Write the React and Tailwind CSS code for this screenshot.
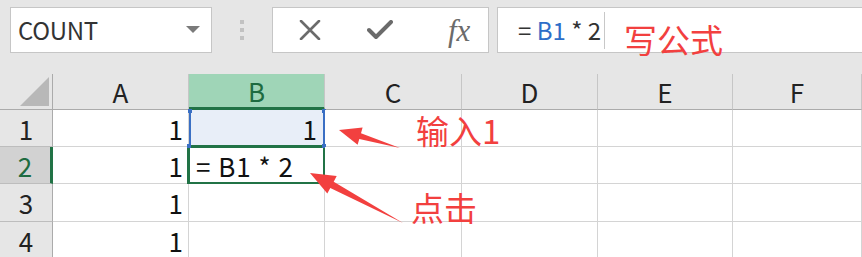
import React from 'react';

const FONT = { fontFamily: '"Noto Sans CJK SC", "Noto Sans", sans-serif' };

const COLS = ['A', 'B', 'C', 'D', 'E', 'F'];

const HeaderCell = ({ label }) => {
    const active = label === 'B';
    return (
        <div className={`flex items-center justify-center text-[26px] border-r border-r-[#c6c6c6] ${active
            ? 'bg-[#9fd5b7] text-[#1e6b40] border-b-[3px] border-b-[#217346]'
            : 'bg-[#e6e6e6] text-[#222] border-b border-b-[#ababab]'}`}>
            {label}
        </div>
    );
};

const RowHeader = ({ n }) => {
    const active = n === 2;
    return (
        <div className={`flex items-center justify-center text-[26px] border-b border-b-[#bdbdbd] ${active
            ? 'bg-[#d2d2d2] text-[#1e6b40] border-r-[3px] border-r-[#217346]'
            : 'bg-[#e6e6e6] text-[#222] border-r border-r-[#ababab]'}`}>
            {n}
        </div>
    );
};

const Cell = ({ children, className = '' }) => (
    <div className={`relative flex items-center border-r border-b border-[#d4d4d4] bg-white text-[26px] text-[#111] ${className}`}>
        {children}
    </div>
);

const App = () => {
    const rows = [1, 2, 3, 4];

    return (
        <div style={FONT} className="relative w-[862px] h-[257px] overflow-hidden bg-[#e6e6e6]">
            {/* ── Formula bar ── */}
            <div className="flex items-start h-[74px] pt-[7px] pl-[10px]">
                <div className="flex items-center justify-between w-[202px] h-[46px] bg-white border border-[#c6c6c6] pl-[7px] pr-[11px]">
                    <span className="text-[24px] text-[#333] tracking-[-0.3px]">COUNT</span>
                    <svg width="14" height="8" viewBox="0 0 14 8">
                        <path d="M0 0 H14 L7 7 Z" fill="#7a7a7a" />
                    </svg>
                </div>
                <div className="flex flex-col items-center justify-center gap-[4px] w-[60px] h-[46px]">
                    <span className="w-[4px] h-[4px] bg-[#c2c2c2]" />
                    <span className="w-[4px] h-[4px] bg-[#c2c2c2]" />
                    <span className="w-[4px] h-[4px] bg-[#c2c2c2]" />
                </div>
                <div className="flex items-center w-[217px] h-[46px] bg-white border border-[#c6c6c6]">
                    <div className="flex justify-center w-[72px] pl-[2px]">
                        <svg width="22" height="20" viewBox="0 0 22 20">
                            <path d="M2 1 L20 19 M20 1 L2 19" stroke="#6b6b6b" strokeWidth="2.6" strokeLinecap="round" />
                        </svg>
                    </div>
                    <div className="flex justify-center w-[72px]">
                        <svg width="26" height="20" viewBox="0 0 26 20">
                            <path d="M2 10 L9 17 L24 2" stroke="#6b6b6b" strokeWidth="4" fill="none" strokeLinecap="round" strokeLinejoin="round" />
                        </svg>
                    </div>
                    <div className="flex justify-center w-[72px] pl-[14px]">
                        <span className="text-[31px] italic text-[#6b6b6b] leading-none" style={{ fontFamily: '"Liberation Serif", serif' }}>fx</span>
                    </div>
                </div>
                <div className="flex items-center flex-1 h-[46px] ml-[8px] bg-white border border-r-0 border-[#c6c6c6] pl-[20px]">
                    <span className="text-[24px] text-[#333] whitespace-pre">= <span className="text-[#2e6ec8]">B1</span> * 2</span>
                    <span className="w-px h-[37px] bg-[#c8c8c8] ml-[3px]" />
                    <span className="ml-[19px] mt-[18px] text-[33px] leading-none text-[#f2403f]">写公式</span>
                </div>
            </div>

            {/* ── Sheet grid ── */}
            <div className="grid grid-cols-[53px_136px_136px_137px_136px_135px_129px] grid-rows-[36px_37px_37px_38px_37px]">
                <div className="flex items-end justify-end pr-[3px] pb-[3px] bg-[#e6e6e6] border-r border-r-[#ababab] border-b border-b-[#ababab]">
                    <svg width="29" height="29" viewBox="0 0 29 29">
                        <path d="M29 0 V29 H0 Z" fill="#b8b8b8" />
                    </svg>
                </div>
                {COLS.map((c) => <HeaderCell key={c} label={c} />)}

                {rows.map((n) => (
                    <React.Fragment key={n}>
                        <RowHeader n={n} />
                        <Cell className="justify-end pr-[5px]">1</Cell>
                        {n === 1 && (
                            <Cell className="justify-end pr-[7px] !bg-[#e8eef8]">
                                1
                                <span className="absolute left-0 top-0 bottom-0 w-[2px] bg-[#3a6fc4]" />
                                <span className="absolute right-[-1px] top-0 bottom-0 w-[2px] bg-[#3a6fc4]" />
                                <span className="absolute left-[-1px] top-[-1px] w-[4px] h-[4px] bg-[#3a6fc4]" />
                                <span className="absolute right-[-2px] top-[-1px] w-[4px] h-[4px] bg-[#3a6fc4]" />
                            </Cell>
                        )}
                        {n === 2 && (
                            <Cell className="justify-start pl-[7px]">
                                <span className="whitespace-pre tracking-[1px]">= B1 * 2</span>
                                <span className="absolute left-[-2px] right-[-2px] top-[-2px] bottom-[-2px] border-[3px] border-[#217346]" />
                                <span className="absolute left-[-2px] top-[-3px] w-[4px] h-[4px] bg-[#3a6fc4]" />
                                <span className="absolute right-[-2px] top-[-3px] w-[4px] h-[4px] bg-[#3a6fc4]" />
                            </Cell>
                        )}
                        {n > 2 && <Cell />}
                        <Cell />
                        <Cell />
                        <Cell />
                        <Cell />
                    </React.Fragment>
                ))}
            </div>

            {/* ── Annotations ── */}
            <svg className="absolute left-0 top-0 pointer-events-none" width="862" height="257" viewBox="0 0 862 257">
                <polygon points="339,130 362.6,127.6 361,133.3 400,148 359.3,139.1 357.6,144.8" fill="#f2403f" />
                <polygon points="310,173 336.7,176 333.7,181.7 403,223 330.3,187.9 327.3,193.6" fill="#f2403f" />
            </svg>
            <span className="absolute left-[416px] top-[114px] text-[33px] leading-none text-[#f2403f]">输入1</span>
            <span className="absolute left-[411px] top-[191px] text-[33px] leading-none text-[#f2403f]">点击</span>
        </div>
    );
};

export default App;
